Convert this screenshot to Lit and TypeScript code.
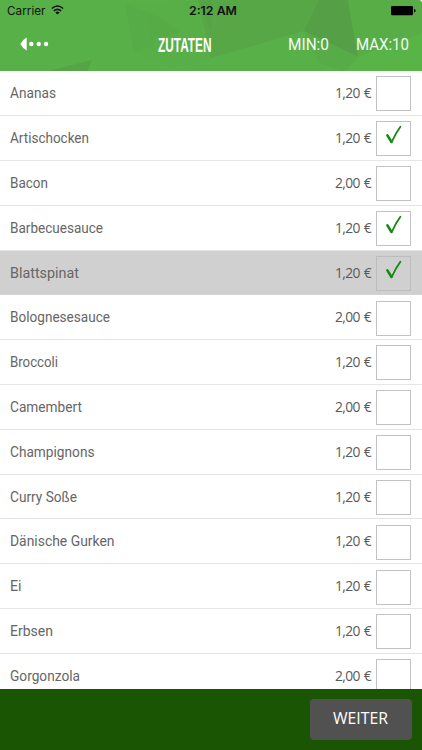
import { LitElement, html, css, svg } from "lit";
import { customElement, property } from "lit/decorators.js";
import { classMap } from "lit/directives/class-map.js";

interface Item {
  name: string;
  width: number;
  price: string;
  checked?: boolean;
  active?: boolean;
}

const items: Item[] = [
  { name: "Ananas", width: 46, price: "1,20 €" },
  { name: "Artischocken", width: 79, price: "1,20 €", checked: true },
  { name: "Bacon", width: 38, price: "2,00 €" },
  { name: "Barbecuesauce", width: 93, price: "1,20 €", checked: true },
  { name: "Blattspinat", width: 69, price: "1,20 €", checked: true, active: true },
  { name: "Bolognesesauce", width: 100, price: "2,00 €" },
  { name: "Broccoli", width: 48, price: "1,20 €" },
  { name: "Camembert", width: 72, price: "2,00 €" },
  { name: "Champignons", width: 84.5, price: "1,20 €" },
  { name: "Curry Soße", width: 67, price: "1,20 €" },
  { name: "Dänische Gurken", width: 104.5, price: "1,20 €" },
  { name: "Ei", width: 11.5, price: "1,20 €" },
  { name: "Erbsen", width: 43, price: "1,20 €" },
  { name: "Gorgonzola", width: 70, price: "2,00 €" },
];

/** A single line of text set to an exact width on a given baseline. */
const line = (
  text: string,
  width: number,
  height: number,
  baseline: number,
  cls: string,
  adjust = "spacingAndGlyphs",
) => html`
  <svg class=${cls} width=${width} height=${height}>
    ${svg`<text x="0" y=${baseline} textLength=${width} lengthAdjust=${adjust}>${text}</text>`}
  </svg>`;

@customElement("ingredient-row")
class IngredientRow extends LitElement {
  @property({ attribute: false }) item!: Item;

  static styles = css`
    :host { display: block; flex: none; }
    .row {
      box-sizing: border-box;
      height: 44.83px;
      display: flex;
      align-items: flex-start;
      padding: 0 11px 0 10px;
      border-bottom: 1px solid #e5e5e7;
      background: #fff;
    }
    .active { background: #d0d0d0; border-color: #d3d3d3; }
    svg { display: block; flex: none; overflow: visible; }
    .name { font: 14.4px Roboto, sans-serif; fill: #666; margin-right: auto; }
    .price {
      font: 14.6px "Open Sans", sans-serif;
      letter-spacing: -0.7px;
      word-spacing: 1.2px;
      fill: #5a5a5a;
      margin-right: 5.5px;
    }
    .box {
      box-sizing: border-box;
      width: 35px;
      height: 35px;
      margin-top: 5.3px;
      border: 1px solid #c2c2c2;
    }
    .active .box { border-color: #bdbdbd; }
    .check { fill: none; stroke: #128a0c; stroke-linecap: round; stroke-linejoin: round; }
  `;

  render() {
    const { name, width, price, checked, active } = this.item;
    return html`
      <div class=${classMap({ row: true, active: !!active })}>
        ${line(name, width, 43, 26.7, "name")}
        ${line(price, 36, 43, 26.9, "price")}
        <div class="box">
          ${checked
            ? html`<svg class="check" width="33" height="33" viewBox="0 0 33 33">
                <path d="M10.4 13.3 L14.5 20" stroke-width="2.5" />
                <path d="M14.7 20 Q18.5 11.5 23.4 4.8" stroke-width="1.8" />
              </svg>`
            : ""}
        </div>
      </div>
    `;
  }
}

@customElement("app-root")
class AppRoot extends LitElement {
  static styles = css`
    :host {
      display: flex;
      flex-direction: column;
      width: 422px;
      height: 750px;
      overflow: hidden;
      background: #fff;
    }
    svg { display: block; flex: none; overflow: visible; }
    .header {
      flex: none;
      display: grid;
      height: 71.2px;
      overflow: hidden;
      background: #58b148;
      border-radius: 0 4px 0 0;
    }
    .header > * { grid-area: 1 / 1; }
    .bars { display: flex; flex-direction: column; z-index: 1; }
    .status { display: flex; height: 22px; padding: 0 6px 0 7px; }
    .status text { font: 11.6px Inter, sans-serif; fill: #111; }
    .status .time text { font-weight: 600; }
    .wifi { margin: 5px 0 0 5px; }
    .time { margin-left: 125px; }
    .battery { margin: 6px 0 0 auto; }
    .nav { display: flex; height: 49px; padding: 0 13px 0 20px; }
    .back { margin-top: 15px; fill: #fff; }
    .title { margin-left: 108.5px; font: bold 21px "Liberation Sans", sans-serif; fill: #fff; }
    .limit { font: 16.4px Roboto, sans-serif; fill: #f3faf2; }
    .min { margin-left: auto; margin-right: 27px; }
    .list { flex: 1; min-height: 0; overflow: hidden; display: flex; flex-direction: column; }
    .footer {
      box-sizing: border-box;
      flex: none;
      height: 61.3px;
      padding: 10.2px 10.5px 0 0;
      display: flex;
      justify-content: flex-end;
      align-items: flex-start;
      background: #1a5503;
    }
    .button {
      display: flex;
      justify-content: center;
      width: 102px;
      height: 41px;
      padding: 0;
      border: 0;
      border-radius: 4px;
      background: #515151;
    }
    .button svg { font: 16px "Open Sans", sans-serif; fill: #fff; }
  `;

  render() {
    return html`
      <div class="header">
        <svg width="422" height="72" viewBox="0 0 422 72">
          <polygon points="125,4 211,0 211,59 172,68 134,52" fill="#58ae47" />
          <polygon points="125,4 158,17 152,46 134,52" fill="#56ac46" />
          <polygon points="146,12 158,17 181,32 151,40" fill="#56ab46" />
          <polygon points="198,0 348,0 304,31 211,58" fill="#58a747" />
          <polygon points="198,0 211,0 211,32" fill="#55a345" />
          <polygon points="348,0 358,57 304,31 319,0" fill="#55a046" />
          <polygon points="304,31 358,57 345,72 318,62" fill="#57ac47" />
          <polygon points="348,0 422,0 422,33 358,57" fill="#58ad47" />
          <polygon points="358,57 422,33 422,72 345,72" fill="#58b447" />
          <polygon points="48,71 92,60 87,72 48,72" fill="#55a446" />
        </svg>
        <div class="bars">
          <div class="status">
            ${line("Carrier", 38.5, 22, 15, "carrier")}
            <svg class="wifi" width="13" height="10" viewBox="0 0 13 10">
              <g fill="none" stroke="#111" stroke-width="1.5">
                <path d="M.8 3.5 Q6.5 -1.4 12.2 3.5" />
                <path d="M2.8 5.9 Q6.5 2.8 10.2 5.9" />
              </g>
              <path d="M4.3 7.4 Q6.5 5.6 8.7 7.4 L6.5 9.6Z" fill="#111" />
            </svg>
            ${line("2:12 AM", 48, 22, 15, "time")}
            <svg class="battery" width="25" height="10" viewBox="0 0 25 10">
              <rect width="22" height="9.3" rx="1.3" />
              <path d="M23 3 Q24.6 3.2 24.6 4.7 Q24.6 6.2 23 6.4Z" />
            </svg>
          </div>
          <div class="nav">
            <svg class="back" width="29" height="14" viewBox="0 0 29 14">
              <path d="M0.3 7 Q2.8 2.5 6.7 .5 V13.5 Q2.8 11.5 .3 7Z" />
              <circle cx="11.3" cy="7" r="2.2" />
              <circle cx="18.7" cy="7" r="2.2" />
              <circle cx="26" cy="7" r="2.2" />
            </svg>
            ${line("ZUTATEN", 53.5, 49, 30.2, "title")}
            ${line("MIN:0", 41, 49, 28.2, "limit min")}
            ${line("MAX:10", 53, 49, 28.2, "limit")}
          </div>
        </div>
      </div>
      <div class="list">
        ${items.map((item) => html`<ingredient-row .item=${item}></ingredient-row>`)}
      </div>
      <div class="footer">
        <button class="button">${line("WEITER", 55, 41, 24.8, "label")}</button>
      </div>
    `;
  }
}
